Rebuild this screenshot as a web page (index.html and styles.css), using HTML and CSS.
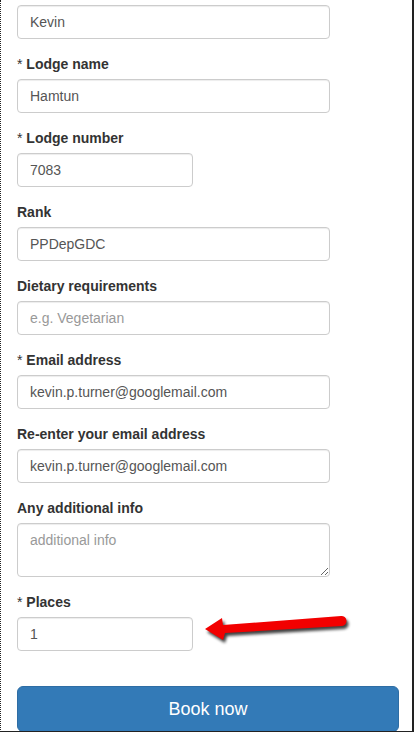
FILE: index.html
```html
<!DOCTYPE html>
<html>
<head>
<meta charset="utf-8">
<link rel="stylesheet" href="styles.css">
</head>
<body>
<div class="frame">
  <form class="form">
    <div class="group">
      <input class="ctl" type="text" value="Kevin">
    </div>
    <div class="group">
      <label class="lbl"><span class="req">*</span> Lodge name</label>
      <input class="ctl" type="text" value="Hamtun">
    </div>
    <div class="group">
      <label class="lbl"><span class="req">*</span> Lodge number</label>
      <input class="ctl short" type="text" value="7083">
    </div>
    <div class="group">
      <label class="lbl">Rank</label>
      <input class="ctl" type="text" value="PPDepGDC">
    </div>
    <div class="group">
      <label class="lbl">Dietary requirements</label>
      <input class="ctl" type="text" placeholder="e.g. Vegetarian">
    </div>
    <div class="group">
      <label class="lbl"><span class="req">*</span> Email address</label>
      <input class="ctl" type="text" value="kevin.p.turner@googlemail.com">
    </div>
    <div class="group">
      <label class="lbl">Re-enter your email address</label>
      <input class="ctl" type="text" value="kevin.p.turner@googlemail.com">
    </div>
    <div class="group">
      <label class="lbl">Any additional info</label>
      <textarea class="ctl area" rows="2" placeholder="additional info"></textarea>
    </div>
    <div class="group">
      <label class="lbl"><span class="req">*</span> Places</label>
      <div class="places">
        <input class="ctl short" type="text" value="1">
        <svg class="arrow" width="160" height="45" viewBox="0 0 160 45">
          <defs>
            <filter id="sh" x="-10%" y="-40%" width="120%" height="180%">
              <feGaussianBlur stdDeviation="1.5"/>
            </filter>
          </defs>
          <path d="M12,27 L29,16 L30,23 L148,14 A5,5 0 0 1 149,24 L32,31 L30,38 Z" fill="#000" opacity="0.75" filter="url(#sh)"/>
          <path d="M10,24 L27,13 L28,20 L146,11 A5,5 0 0 1 147,21 L30,28 L28,35 Z" fill="#f20000"/>
        </svg>
      </div>
    </div>
    <button class="btn" type="button">Book now</button>
  </form>
</div>
</body>
</html>
```

FILE: styles.css
```css
* { box-sizing: border-box; }
html, body {
  margin: 0;
  padding: 0;
  background: #fff;
}
body {
  font-family: "Liberation Sans", Arial, sans-serif;
  font-size: 14px;
  line-height: 20px;
  color: #333;
}
.frame {
  width: 414px;
  height: 732px;
  overflow: hidden;
  border-left: 1px dotted #222;
  border-right: 2px solid #222;
  border-bottom: 1px solid #222;
  padding: 5px 0 0 16px;
}
.form {
  width: 382px;
}
.group {
  margin-bottom: 15px;
}
.lbl {
  display: block;
  font-weight: bold;
  margin-bottom: 5px;
  color: #333;
}
.req {
  font-weight: normal;
}
.ctl {
  display: block;
  width: 313px;
  height: 34px;
  padding: 6px 12px;
  font-family: "Liberation Sans", Arial, sans-serif;
  font-size: 14px;
  line-height: 20px;
  color: #555;
  background: #fff;
  border: 1px solid #ccc;
  border-radius: 4px;
  box-shadow: inset 0 1px 1px rgba(0,0,0,0.075);
  margin: 0;
}
.ctl::placeholder {
  color: #999;
}
.short {
  width: 176px;
}
.area {
  height: 54px;
  resize: vertical;
}
.places {
  position: relative;
}
.arrow {
  position: absolute;
  left: 178px;
  top: -12px;
}
.btn {
  display: block;
  width: 382px;
  height: 46px;
  margin-top: 35px;
  padding: 10px 16px;
  font-family: "Liberation Sans", Arial, sans-serif;
  font-size: 18px;
  line-height: 24px;
  color: #fff;
  background: #337ab7;
  border: 1px solid #2e6da4;
  border-radius: 6px;
}
```
